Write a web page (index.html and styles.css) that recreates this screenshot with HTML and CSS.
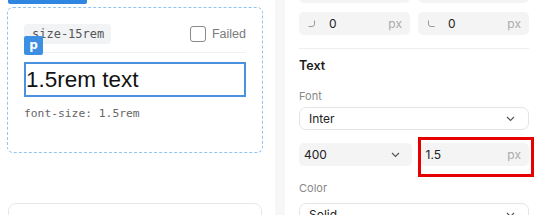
FILE: index.html
```html
<!DOCTYPE html>
<html>
<head>
<meta charset="utf-8">
<link rel="stylesheet" href="styles.css">
</head>
<body>
<div class="page">
  <div class="left">
    <div class="tab"></div>
    <div class="card">
      <div class="badge">p</div>
      <div class="card-head">
        <span class="chip">size-15rem</span>
        <label class="check"><span class="box"></span><span class="check-label">Failed</span></label>
      </div>
      <div class="sample">1.5rem text</div>
      <div class="note">font-size: 1.5rem</div>
    </div>
    <div class="card2"></div>
  </div>
  <div class="gutter"></div>
  <div class="right">
    <div class="row row-first">
      <div class="field"></div>
      <div class="field"></div>
    </div>
    <div class="row row-second">
      <div class="field">
        <svg class="corner" width="8" height="8" viewBox="0 0 8 8"><path d="M6.5 0.5 V4 Q6.5 6.5 4 6.5 H0.5" fill="none" stroke="#9a9a9a" stroke-width="1"/></svg>
        <span class="val">0</span><span class="unit">px</span>
      </div>
      <div class="field">
        <svg class="corner" width="8" height="8" viewBox="0 0 8 8"><path d="M1.5 0.5 V4 Q1.5 6.5 4 6.5 H7.5" fill="none" stroke="#9a9a9a" stroke-width="1"/></svg>
        <span class="val">0</span><span class="unit">px</span>
      </div>
    </div>
    <div class="divider"></div>
    <div class="heading">Text</div>
    <div class="label label-font">Font</div>
    <div class="select select-font">
      <span>Inter</span>
      <svg class="chev" width="9" height="6" viewBox="0 0 9 6"><path d="M1 1 L4.5 4.5 L8 1" fill="none" stroke="#555" stroke-width="1.2"/></svg>
    </div>
    <div class="row row-weight">
      <div class="field field-select">
        <span class="val">400</span>
        <svg class="chev" width="9" height="6" viewBox="0 0 9 6"><path d="M1 1 L4.5 4.5 L8 1" fill="none" stroke="#555" stroke-width="1.2"/></svg>
      </div>
      <div class="field field-size">
        <span class="val">1.5</span><span class="unit">px</span>
        <div class="highlight"></div>
      </div>
    </div>
    <div class="label label-color">Color</div>
    <div class="select select-color">
      <span>Solid</span>
      <svg class="chev" width="9" height="6" viewBox="0 0 9 6"><path d="M1 1 L4.5 4.5 L8 1" fill="none" stroke="#555" stroke-width="1.2"/></svg>
    </div>
  </div>
</div>
</body>
</html>
```

FILE: styles.css
```css
* { box-sizing: border-box; }
html, body {
  margin: 0;
  padding: 0;
  width: 535px;
  height: 215px;
  overflow: hidden;
  background: #fff;
}
.page {
  display: flex;
  width: 535px;
  height: 215px;
  overflow: hidden;
}
.left {
  width: 275px;
  flex: none;
  display: flex;
  flex-direction: column;
  align-items: flex-start;
  background: #fff;
}
.tab {
  flex: none;
  width: 79px;
  height: 4px;
  margin-left: 8px;
  background: #2f86e0;
  border-radius: 0 0 2px 2px;
}
.card {
  flex: none;
  position: relative;
  margin: 3px 0 0 7px;
  width: 256px;
  height: 146px;
  border: 1px dashed #8ec5f2;
  border-radius: 6px;
  padding: 16px 16px 0 16px;
}
.badge {
  position: absolute;
  left: 16px;
  top: 28px;
  width: 19px;
  height: 19px;
  background: #3c8fe2;
  color: #fff;
  border-radius: 2px;
  font: bold 12px/18px "DejaVu Sans", sans-serif;
  text-align: center;
}
.card-head {
  display: flex;
  justify-content: space-between;
  align-items: flex-start;
  height: 29px;
  border-bottom: 1px solid #f0f0f0;
}
.chip {
  display: inline-block;
  height: 20px;
  padding: 0 7px 0 8px;
  background: #f2f3f5;
  border-radius: 4px;
  color: #555;
  font: 12px/20px "DejaVu Sans Mono", monospace;
}
.check {
  display: flex;
  align-items: center;
  margin-top: 2px;
}
.box {
  width: 16px;
  height: 16px;
  border: 1.5px solid #8a8a8a;
  border-radius: 3px;
  margin-right: 6px;
}
.check-label {
  color: #7a7a7a;
  font: 12.5px/16px "Liberation Sans", Arial, sans-serif;
}
.sample {
  margin-top: 9px;
  height: 35px;
  border: 2px solid #4a91e0;
  color: #111;
  font: 22.5px/31px "Liberation Sans", Arial, sans-serif;
  padding-left: 0;
}
.note {
  margin-top: 9px;
  color: #666;
  font: 11.3px/16px "DejaVu Sans Mono", monospace;
}
.card2 {
  flex: none;
  margin: 50px 0 0 8px;
  width: 254px;
  height: 40px;
  border: 1px solid #e8e8e8;
  border-radius: 8px;
}
.gutter {
  width: 10px;
  flex: none;
  background: #f7f7f7;
}
.right {
  flex: 1;
  background: #fff;
  padding: 0 6px 0 14px;
  font-family: Inter, "Liberation Sans", sans-serif;
  font-size: 12px;
  color: #222;
}
.row {
  display: flex;
  gap: 8px;
}
.row-first { margin-top: -20px; }
.row-second { margin-top: 9px; }
.field {
  position: relative;
  flex: 1;
  height: 23px;
  background: #f4f4f4;
  border-radius: 5px;
  display: flex;
  align-items: center;
  padding: 0 8px 0 9px;
}
.corner { flex: none; margin-right: 13px; }
.val { flex: 1; line-height: 16px; }
.unit { color: #aaa; }
.divider {
  margin-top: 13px;
  height: 1px;
  background: #eeeeee;
}
.heading {
  margin-top: 8px;
  font-weight: 600;
  font-size: 12.5px;
  line-height: 17px;
  color: #1a1a1a;
}
.label {
  color: #888;
  font-size: 11px;
  line-height: 14px;
}
.label-font { margin-top: 15px; }
.select {
  height: 23px;
  border: 1px solid #e4e4e4;
  border-radius: 7px;
  display: flex;
  align-items: center;
  justify-content: space-between;
  padding: 0 13px 0 9px;
  background: #fff;
}
.select-font { margin-top: 4px; }
.row-weight { margin-top: 13px; }
.field-select { padding: 0 12px 0 5px; }
.field-size { padding: 0 8px 0 6px; }
.highlight {
  position: absolute;
  left: -2px;
  top: -6px;
  width: 116px;
  height: 40px;
  border: 3px solid #e60000;
  pointer-events: none;
}
.label-color { margin-top: 15px; }
.select-color { margin-top: 8px; }
```
